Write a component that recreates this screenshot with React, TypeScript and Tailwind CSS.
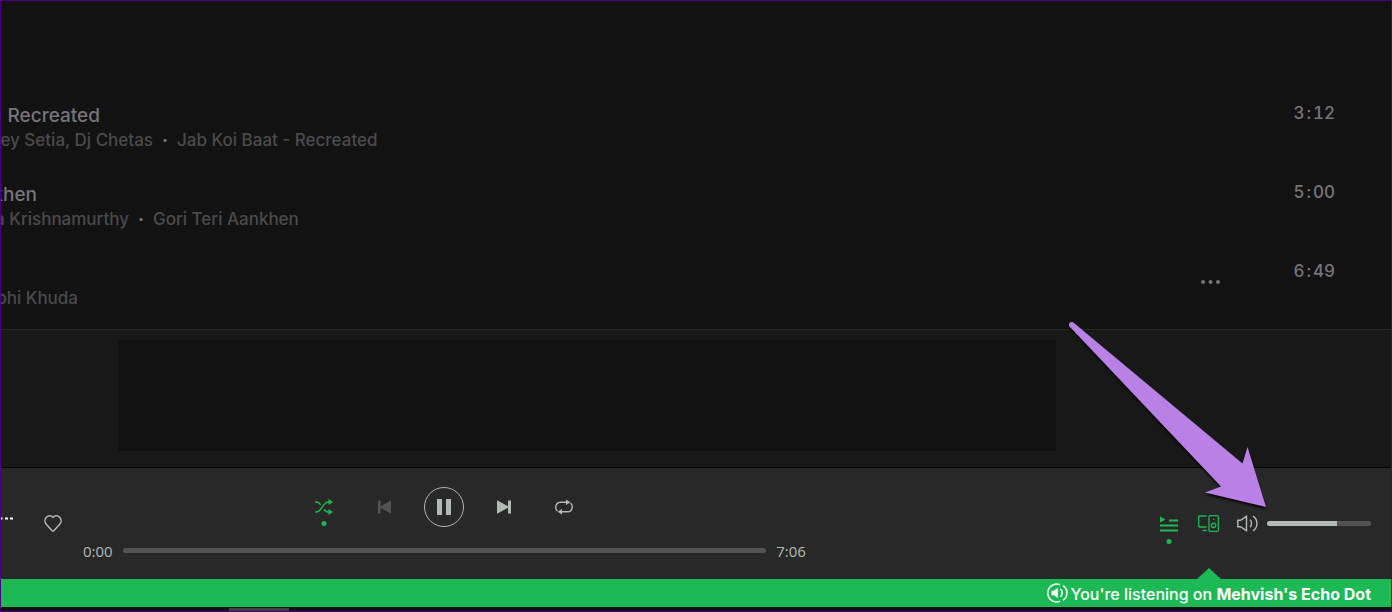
import type { ReactNode } from 'react'

type Track = {
  title: string
  artist: string
  album: string
  minutes: string
  seconds: string
  titleWidth: string
  artistWidth: string
  menu?: boolean
}

const tracks: Track[] = [
  {
    title: 'Recreated',
    artist: 'ey Setia, Dj Chetas',
    album: 'Jab Koi Baat - Recreated',
    minutes: '3',
    seconds: '12',
    titleWidth: 'w-[99px]',
    artistWidth: 'w-[152px]',
  },
  {
    title: 'khen',
    artist: 'a Krishnamurthy',
    album: 'Gori Teri Aankhen',
    minutes: '5',
    seconds: '00',
    titleWidth: 'w-9',
    artistWidth: 'w-32',
  },
  {
    title: '',
    artist: 'bhi Khuda',
    album: '',
    minutes: '6',
    seconds: '49',
    titleWidth: 'w-9',
    artistWidth: 'w-[77px]',
    menu: true,
  },
]

function TrackRow({ track }: { track: Track }) {
  return (
    <li className="flex h-[79px] items-start justify-between pr-14">
      <div className="min-w-0 pt-px">
        <p className={`flex h-7 justify-end overflow-hidden whitespace-nowrap text-[19px] leading-7 font-medium text-[#77747a] ${track.titleWidth}`}>
          {track.title}
        </p>
        <p className="flex whitespace-nowrap text-[17px] leading-5 font-medium text-[#4b4a4b]">
          <span className={`flex justify-end overflow-hidden ${track.artistWidth}`}>{track.artist}</span>
          {track.album && (
            <>
              <span className="w-6 text-center font-extrabold text-[#77747a]">·</span>
              <span>{track.album}</span>
            </>
          )}
        </p>
      </div>
      <div className="flex items-start text-[17px] leading-6 font-medium text-[#77747a]">
        {track.menu && (
          <button type="button" aria-label="More options" className="mt-[13px] mr-[73px] flex h-5 items-center">
            <svg width="19" height="4" viewBox="0 0 19 4" fill="currentColor">
              <circle cx="2" cy="2" r="2" />
              <circle cx="9.5" cy="2" r="2" />
              <circle cx="17" cy="2" r="2" />
            </svg>
          </button>
        )}
        <time className="tabular-nums">
          {track.minutes}
          <span className="px-0.5">:</span>
          {track.seconds}
        </time>
      </div>
    </li>
  )
}

type IconButtonProps = {
  label: string
  className?: string
  dot?: boolean
  children: ReactNode
}

function IconButton({ label, className = '', dot, children }: IconButtonProps) {
  return (
    <button type="button" aria-label={label} className={`relative flex shrink-0 items-center justify-center ${className}`}>
      {children}
      {dot && <span className="absolute top-full left-1/2 mt-1 h-[5px] w-[5px] -translate-x-1/2 rounded-full bg-[#1db954]" />}
    </button>
  )
}

function ShuffleIcon() {
  return (
    <svg width="18" height="16" viewBox="0 0 18 16" fill="none" stroke="currentColor" strokeWidth="1.4">
      <path d="M0 3h1.5c1.4 0 2.3.6 3.3 1.8l.9 1.1M0 13h1.5c1.6 0 2.5-.8 3.5-2l4.5-5.8C10.500 3.800 11.300 3 13 3h1M9 10.300l.8 1C10.800 12.500 11.600 13 13 13h1" />
      <path d="M13.500 0 18 3l-4.500 3zM13.500 10l4.500 3-4.500 3z" fill="currentColor" stroke="none" />
    </svg>
  )
}

function RepeatIcon() {
  return (
    <svg width="18" height="16" viewBox="0 0 18 16" fill="none" stroke="currentColor" strokeWidth="1.4">
      <path d="M2.500 12.200C1.300 11.500.8 10.300.8 8.500.8 5 2.500 3.200 5.500 3.200H12M15.500 4c1.200.7 1.700 1.900 1.700 3.700 0 3.500-1.700 5.100-4.700 5.100H6" />
      <path d="M11 .5 15.500 3.200 11 6zM7 10l-4.500 2.800L7 15.500z" fill="currentColor" stroke="none" />
    </svg>
  )
}

function PreviousIcon() {
  return (
    <svg width="13" height="14" viewBox="0 0 13 14" fill="currentColor">
      <path d="M0 .5h2.500v5.700L13 .5v13L2.500 7.800v5.700H0z" />
    </svg>
  )
}

function NextIcon() {
  return (
    <svg width="14" height="14" viewBox="0 0 14 14" fill="currentColor">
      <path d="M0 .2 11 6.200V.5h3v13h-3V7.800L0 13.800z" />
    </svg>
  )
}

function HeartIcon() {
  return (
    <svg width="18" height="17" viewBox="0 0 18 17" fill="none" stroke="currentColor" strokeWidth="1.5">
      <path d="M9 2.300C7.200.4 4.200.4 2.400 2.200c-1.900 1.900-2 4.900-.1 7L7.900 15.600c.6.700 1.600.7 2.200 0l5.600-6.400c1.900-2.100 1.800-5.100-.1-7C13.800.4 10.800.4 9 2.300z" />
    </svg>
  )
}

function QueueIcon() {
  return (
    <svg width="18" height="16" viewBox="0 0 18 16" fill="none" stroke="currentColor" strokeWidth="1.8">
      <path d="M9 4.500h9M0 9.500h18M0 14.500h18" />
      <path d="M0 .5 5.500 3.500 0 6.500z" fill="currentColor" stroke="none" />
    </svg>
  )
}

function DevicesIcon() {
  return (
    <svg width="21" height="17" viewBox="0 0 21 17" fill="none" stroke="currentColor" strokeWidth="1.3">
      <path d="M8.500 1H1.700C1 1 .7 1.300.7 2v9c0 .7.3 1 1 1h6.800M4.500 15.500h4" />
      <rect x="11" y=".7" width="9.300" height="15.600" rx="1" />
      <circle cx="15.600" cy="10.300" r="2.200" />
      <path d="M15 4.300h1.400" />
    </svg>
  )
}

function VolumeIcon() {
  return (
    <svg width="21" height="17" viewBox="0 0 21 17" fill="none" stroke="currentColor" strokeWidth="1.4">
      <path d="M.8 5.300 3.500 5.300 9.500 1.300v14.400l-6-4H.8z" />
      <path d="M13 4.800c2 1.700 2 5.700 0 7.400M16 1.200c5.200 3.300 5.200 11.300 0 14.600" />
    </svg>
  )
}

function CastIcon() {
  return (
    <svg width="21" height="20" viewBox="0 0 21 20" fill="none" stroke="currentColor" strokeWidth="1.5">
      <path d="M13 1.600A9 9 0 1 0 13 18.400" />
      <path d="M16 2.700c5.300 3.600 5.300 11 0 14.600M13.300 6c2.600 2.200 2.600 5.800 0 8" />
      <path d="M4.500 7.800h2.300L11 5v10l-4.200-2.800H4.500z" fill="currentColor" stroke="none" />
    </svg>
  )
}

function Player() {
  return (
    <section aria-label="Player" className="flex h-28 items-center border-t border-black bg-[#282828] text-[#b3bab5]">
      <div className="flex w-[82px] shrink-0 items-center">
        <IconButton label="More options" className="-mt-2.5 h-4 w-3 text-white">
          <svg width="12" height="3" viewBox="0 0 12 3" fill="currentColor">
            <path d="M0 .5h1.500v2H0zM4 .5h3v2H4zM9 .5h3v2H9z" />
          </svg>
        </IconButton>
        <IconButton label="Save to library" className="ml-[31px]">
          <HeartIcon />
        </IconButton>
      </div>

      <div className="flex w-[52%] flex-col gap-3.5">
        <div className="flex h-10 items-center justify-center gap-5">
          <IconButton label="Shuffle" dot className="h-5 w-10 text-[#1db954]">
            <ShuffleIcon />
          </IconButton>
          <IconButton label="Previous" className="w-10 text-[#535353]">
            <PreviousIcon />
          </IconButton>
          <IconButton label="Pause" className="h-10 w-10 rounded-full border border-[#b3b3b3]">
            <svg width="14" height="16" viewBox="0 0 14 16" fill="currentColor">
              <path d="M0 0h5v16H0zM9 0h5v16H9z" />
            </svg>
          </IconButton>
          <IconButton label="Next" className="w-10">
            <NextIcon />
          </IconButton>
          <IconButton label="Repeat" className="w-10">
            <RepeatIcon />
          </IconButton>
        </div>
        <div className="flex h-5 items-center gap-2.5 font-['Open_Sans'] text-[15px] leading-5">
          <span>0:00</span>
          <input
            type="range"
            aria-label="Track position"
            defaultValue={0}
            className="h-[5px] min-w-0 flex-1 appearance-none rounded-full bg-[#535353] [&::-webkit-slider-thumb]:h-0 [&::-webkit-slider-thumb]:w-0 [&::-webkit-slider-thumb]:appearance-none"
          />
          <span>7:06</span>
        </div>
      </div>

      <div className="ml-auto flex items-center pr-5">
        <IconButton label="Queue" dot className="mr-5 h-[22px] text-[#1db954]">
          <QueueIcon />
        </IconButton>
        <IconButton label="Devices" className="mr-[18px] text-[#1db954]">
          <DevicesIcon />
        </IconButton>
        <IconButton label="Mute" className="mr-[9px]">
          <VolumeIcon />
        </IconButton>
        <input
          type="range"
          aria-label="Volume"
          defaultValue={67}
          className="h-[5px] w-[104px] appearance-none rounded-full bg-[linear-gradient(90deg,#b3bab5_67%,#535353_67%)] [&::-webkit-slider-thumb]:h-0 [&::-webkit-slider-thumb]:w-0 [&::-webkit-slider-thumb]:appearance-none"
        />
      </div>
    </section>
  )
}

function PointerArrow() {
  return (
    <svg
      aria-hidden="true"
      width="210"
      height="200"
      viewBox="0 0 210 200"
      className="pointer-events-none absolute right-[116px] bottom-[96px] drop-shadow-[0_2px_1px_rgba(0,0,0,0.8)]"
    >
      <path d="M9 8C6 5.500 2.500 8.500 4.500 11.500L156 171.500l-16 6 61 14.500L182.500 132l-5 16.500z" fill="#b980e6" />
    </svg>
  )
}

export default function App() {
  return (
    <div className="relative overflow-hidden border border-[#4b0082] bg-[#121212] font-['Inter',sans-serif]">
      <main className="pt-[100px]">
        <ul className="h-[228px]">
          {tracks.map((track) => (
            <TrackRow key={track.minutes} track={track} />
          ))}
        </ul>
      </main>

      <div className="h-[138px] border-t border-[#282828] bg-[#181818] pt-2.5 pr-[24.1%] pl-[117px]">
        <div className="h-[111px] bg-[#121212]" />
      </div>

      <Player />

      <footer className="relative flex h-7 items-center justify-end gap-0.5 bg-[#1db954] pr-5 text-base text-white">
        <svg width="24" height="11" viewBox="0 0 24 11" fill="#1db954" className="absolute right-[170px] bottom-full">
          <path d="M12 0 24 11H0z" />
        </svg>
        <CastIcon />
        <p className="pt-px font-medium">
          You're listening on <strong className="font-bold">Mehvish's Echo Dot</strong>
        </p>
      </footer>
      <div className="flex h-1 items-end bg-[#121212] pl-[228px]">
        <div className="h-[3px] w-[60px] bg-[#404040]" />
      </div>

      <PointerArrow />
    </div>
  )
}
